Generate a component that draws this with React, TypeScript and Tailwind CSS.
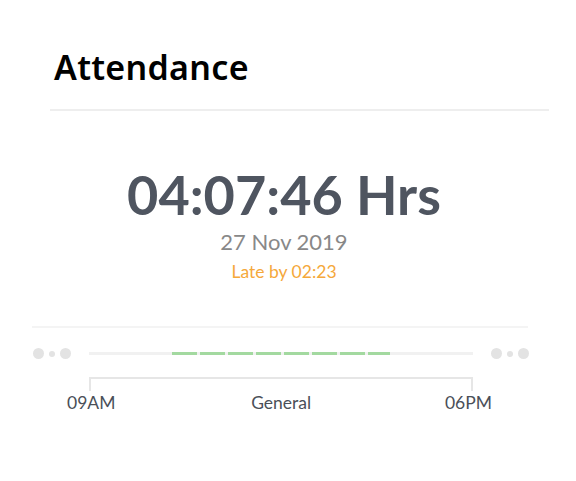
import React from "react";

const Dots: React.FC = () => (
  <div className="flex items-center gap-[5px]">
    <span className="h-[11px] w-[11px] rounded-full bg-[#e3e3e3]" />
    <span className="h-[6px] w-[6px] rounded-full bg-[#e3e3e3]" />
    <span className="h-[11px] w-[11px] rounded-full bg-[#e3e3e3]" />
  </div>
);

const App: React.FC = () => {
  return (
    <div className="h-[481px] w-[576px] bg-white font-['Lato',sans-serif]">
      <div className="ml-[50px] w-[499px] border-b-2 border-[#eeeeee] pb-[20px] pt-[45px]">
        <h1 className="pl-[4px] font-['Noto_Sans',sans-serif] text-[34px] font-semibold leading-[44px] tracking-[0.3px] text-black">
          Attendance
        </h1>
      </div>

      <div className="flex flex-col items-center pr-[8px] pt-[51px]">
        <div className="text-[54px] font-bold leading-[66px] text-[#4f5560]">
          04:07:46 Hrs
        </div>
        <div className="mt-[1px] text-[22px] leading-[26px] text-[#888888]">
          27 Nov 2019
        </div>
        <div className="mt-[6px] text-[17.5px] leading-[22px] text-[#f5a83a]">
          Late by 02:23
        </div>
      </div>

      <div className="ml-[32px] mt-[43px] h-[2px] w-[496px] bg-[#f4f4f4]" />

      <div className="mt-[20px] flex items-center pl-[33px] pr-[47px]">
        <Dots />
        <div className="mx-[18px] flex h-[3px] flex-1 items-center bg-[#f1f1f1]">
          <div className="ml-[83px] h-[3px] w-[218px] bg-[repeating-linear-gradient(90deg,#a3d9a0_0px,#a3d9a0_25px,transparent_25px,transparent_28px)]" />
        </div>
        <Dots />
      </div>

      <div className="ml-[89px] mt-[18px] h-[14px] w-[384px] border-x-2 border-t-2 border-[#e6e6e6]" />

      <div className="mt-[1px] flex h-[24px] justify-between pl-[67px] pr-[84px] text-[17.5px] leading-[22px] text-[#4a4f58]">
        <span>09AM</span>
        <span className="pl-[2px]">General</span>
        <span>06PM</span>
      </div>
    </div>
  );
};

export default App;
